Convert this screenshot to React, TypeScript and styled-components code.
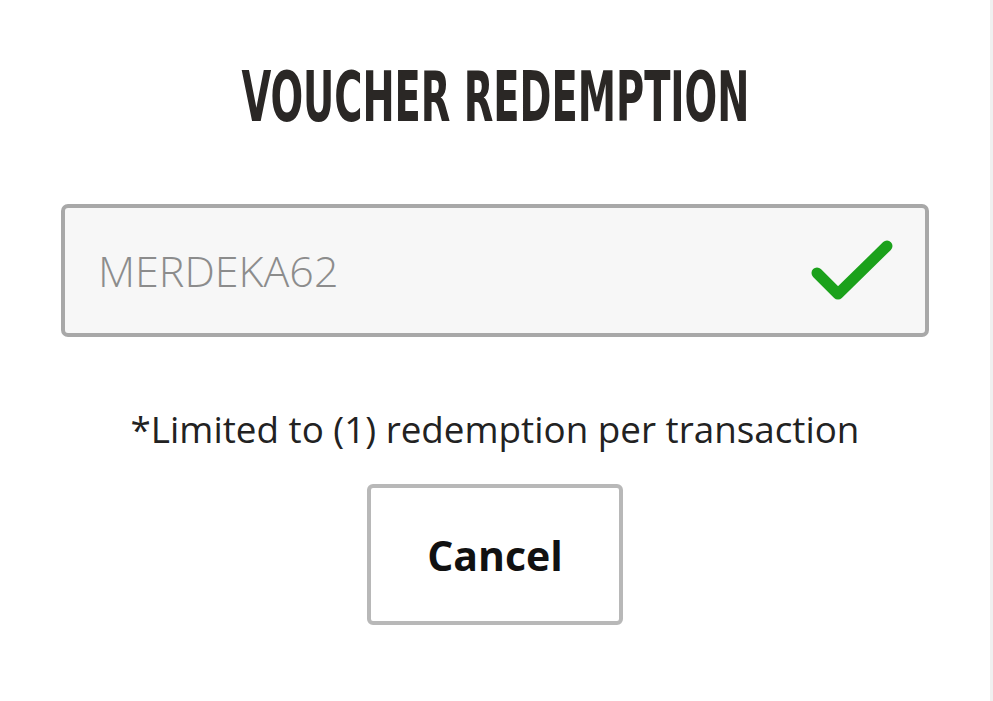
import React from "react";
import styled, { createGlobalStyle } from "styled-components";

const Global = createGlobalStyle`
  html, body { margin: 0; padding: 0; background: #ffffff; }
  body { font-family: "Open Sans", "Noto Sans", sans-serif; }
`;

const Page = styled.div`
  width: 993px;
  height: 701px;
  box-sizing: border-box;
  display: flex;
  flex-direction: column;
  align-items: center;
  padding-top: 59px;
  background: #ffffff;
  border-right: 3px solid #f0f0f0;
`;

const Title = styled.h1`
  margin: 0;
  font-family: "DejaVu Sans", sans-serif;
  font-stretch: condensed;
  font-weight: 700;
  font-size: 70px;
  line-height: 76px;
  color: #2a2725;
  letter-spacing: 0;
  transform: scaleX(0.61);
  white-space: nowrap;
`;

const Field = styled.div`
  margin-top: 69px;
  width: 868px;
  height: 133px;
  box-sizing: border-box;
  border: 4px solid #a8a8a8;
  border-radius: 7px;
  background: #f7f7f7;
  display: flex;
  align-items: center;
  justify-content: space-between;
  padding: 0 32px 0 33px;
`;

const Code = styled.span`
  font-family: "Open Sans", sans-serif;
  font-weight: 300;
  font-size: 43px;
  color: #8c8c8c;
`;

const Note = styled.p`
  margin: 67px 0 0;
  font-family: "Open Sans", sans-serif;
  font-size: 36.8px;
  color: #222222;
`;

const CancelButton = styled.button`
  margin-top: 30px;
  width: 256px;
  height: 141px;
  box-sizing: border-box;
  border: 4px solid #b8b8b8;
  border-radius: 6px;
  background: #ffffff;
  font-family: "Open Sans", sans-serif;
  font-weight: 700;
  font-size: 41px;
  color: #111111;
  padding: 0;
`;

const Check = () => (
  <svg width="82" height="62" viewBox="0 0 82 62">
    <path
      d="M6 33 L27 54 L76 6"
      fill="none"
      stroke="#1ba11b"
      strokeWidth="11"
      strokeLinecap="round"
      strokeLinejoin="round"
    />
  </svg>
);

export default function App() {
  return (
    <>
      <Global />
      <Page>
        <Title>VOUCHER REDEMPTION</Title>
        <Field>
          <Code>MERDEKA62</Code>
          <Check />
        </Field>
        <Note>*Limited to (1) redemption per transaction</Note>
        <CancelButton>Cancel</CancelButton>
      </Page>
    </>
  );
}
